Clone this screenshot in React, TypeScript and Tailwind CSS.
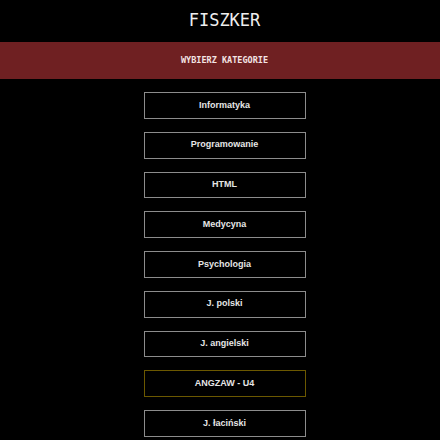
const categories = [
  { name: 'Informatyka' },
  { name: 'Programowanie' },
  { name: 'HTML' },
  { name: 'Medycyna' },
  { name: 'Psychologia' },
  { name: 'J. polski' },
  { name: 'J. angielski' },
  { name: 'ANGZAW - U4', active: true },
  { name: 'J. łaciński' },
];

export default function App() {
  return (
    <div className="min-h-[440px] bg-black overflow-hidden">
      {/* Title */}
      <div className="h-[42px] flex items-center justify-center pl-[9px]">
        <h1 className="text-[17px] font-medium text-[#eeeeee] font-['DejaVu_Sans_Mono',monospace]">
          FISZKER
        </h1>
      </div>

      {/* Banner */}
      <div className="h-[37px] bg-[#6f2022] flex items-center justify-center pl-[9px]">
        <span className="text-[8.5px] font-bold text-[#f3e4e4] font-['DejaVu_Sans_Mono',monospace]">
          WYBIERZ KATEGORIE
        </span>
      </div>

      {/* Category list */}
      <div className="flex flex-col items-center pl-[9px] pt-[13px]">
        {categories.map((c) => (
          <button
            key={c.name}
            className={
              'w-[162px] h-[26.75px] mb-[13px] bg-black border flex items-center justify-center text-[9px] font-bold text-[#e6e6e6] font-["Liberation_Sans",Arial,sans-serif] ' +
              (c.active ? 'border-[#6b5800]' : 'border-[#8c8c8c]')
            }
          >
            {c.name}
          </button>
        ))}
      </div>
    </div>
  );
}
